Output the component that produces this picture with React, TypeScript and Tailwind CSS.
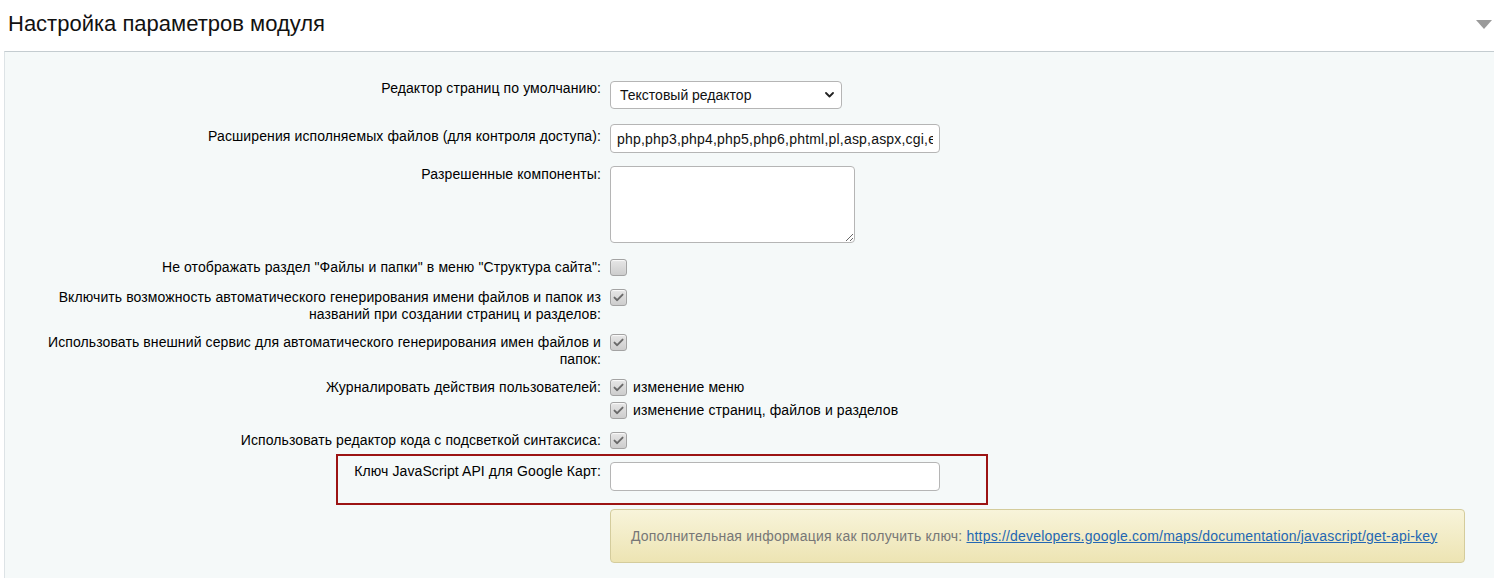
import type { ReactNode } from "react";

const font = { fontFamily: '"Liberation Sans", Arial, sans-serif' };

function Check({ checked }: { checked?: boolean }) {
  return (
    <span className="flex h-[17px] w-[17px] shrink-0 items-center justify-center rounded-[3px] border border-[#a3a3a3] bg-gradient-to-b from-[#e6e6e6] to-[#cdcdcd] shadow-[inset_0_1px_1px_rgba(255,255,255,0.8)]">
      {checked && (
        <svg width="11" height="9" viewBox="0 0 11 9" fill="none">
          <path d="M1.5 4.6 L4.2 7.2 L9.6 1.6" stroke="#6a6a6a" strokeWidth="1.9" strokeLinecap="round" strokeLinejoin="round" />
        </svg>
      )}
    </span>
  );
}

function Row({
  label,
  offset,
  className,
  children,
}: {
  label: ReactNode;
  offset: string;
  className?: string;
  children: ReactNode;
}) {
  return (
    <div className={`flex items-start ${className ?? ""}`}>
      <div className={`w-[596px] shrink-0 pl-[34px] text-right text-[14px] leading-[17px] tracking-[0.1px] text-black ${offset}`}>
        {label}
      </div>
      <div className="ml-[9px] flex-1">{children}</div>
    </div>
  );
}

export default function App() {
  return (
    <div className="min-h-[578px] overflow-hidden bg-white" style={font}>
      {/* heading */}
      <div className="flex h-[51px] items-start justify-between pl-[8px] pr-[2px]">
        <h1 className="mt-[10px] text-[22px] leading-[28px] text-[#111]">Настройка параметров модуля</h1>
        <svg className="mt-[20px]" width="16" height="9" viewBox="0 0 16 9">
          <path d="M0 0 H16 L8 9 Z" fill="#9a9a9a" />
        </svg>
      </div>

      {/* settings panel */}
      <div className="ml-[4px] h-[527px] border-t border-l border-t-[#c4ccd0] border-l-[#dde3e6] bg-[#f5f9f9] pt-[29px]">
        <Row label="Редактор страниц по умолчанию:" offset="mt-[-1px]">
          <div className="relative h-[28px] w-[232px] rounded-[4px] border border-[#b5b5b5] bg-white">
            <span className="absolute left-[9px] top-[5px] text-[14px] leading-[17px] text-[#111]">Текстовый редактор</span>
            <svg className="absolute right-[7px] top-[10px]" width="9" height="6" viewBox="0 0 9 6" fill="none">
              <path d="M1 1 L4.5 4.5 L8 1" stroke="#222" strokeWidth="1.8" strokeLinecap="round" strokeLinejoin="round" />
            </svg>
          </div>
        </Row>

        <Row label="Расширения исполняемых файлов (для контроля доступа):" offset="mt-[4px]" className="mt-[15px]">
          <input
            readOnly
            defaultValue="php,php3,php4,php5,php6,phtml,pl,asp,aspx,cgi,exe,ico,shtm,shtml"
            className="h-[29px] w-[330px] rounded-[4px] border border-[#b5b5b5] bg-white px-[6px] text-[14px] tracking-[0.2px] text-[#111] outline-none"
            style={font}
          />
        </Row>

        <Row label="Разрешенные компоненты:" offset="mt-0" className="mt-[13px]">
          <textarea
            readOnly
            className="block h-[77px] w-[245px] resize-y rounded-[4px] border border-[#b5b5b5] bg-white outline-none"
          />
        </Row>

        <Row label={'Не отображать раздел "Файлы и папки" в меню "Структура сайта":'} offset="mt-0" className="mt-[16px]">
          <Check />
        </Row>

        <Row
          label="Включить возможность автоматического генерирования имени файлов и папок из названий при создании страниц и разделов:"
          offset="mt-0"
          className="mt-[13px]"
        >
          <Check checked />
        </Row>

        <Row
          label="Использовать внешний сервис для автоматического генерирования имен файлов и папок:"
          offset="mt-0"
          className="mt-[11px]"
        >
          <Check checked />
        </Row>

        <Row label="Журналировать действия пользователей:" offset="mt-0" className="mt-[11px]">
          <div className="flex flex-col gap-[6px] text-[14px] leading-[17px] tracking-[0.1px] text-black">
            <label className="flex items-center gap-[6px]">
              <Check checked />
              изменение меню
            </label>
            <label className="flex items-center gap-[6px]">
              <Check checked />
              изменение страниц, файлов и разделов
            </label>
          </div>
        </Row>

        <Row label="Использовать редактор кода с подсветкой синтаксиса:" offset="mt-0" className="mt-[13px]">
          <Check checked />
        </Row>

        <div className="relative mt-[5px] pt-[8px] pb-[14px]">
          <div className="absolute left-[331px] top-0 h-[51px] w-[652px] border-2 border-[#9c1414]" />
          <Row label="Ключ JavaScript API для Google Карт:" offset="mt-[1px]">
            <input className="h-[29px] w-[330px] rounded-[4px] border border-[#b5b5b5] bg-white outline-none" />
          </Row>
        </div>

        <div className="ml-[605px] mt-[4px] flex h-[54px] w-[855px] items-center rounded-[4px] border border-[#d4cc9c] bg-gradient-to-b from-[#f8f4da] to-[#ede4b3] pl-[20px] text-[14px] tracking-[0.2px] text-[#777]">
          Дополнительная информация как получить ключ:&nbsp;
          <a href="#" className="text-[#2467b3] underline">
            https://developers.google.com/maps/documentation/javascript/get-api-key
          </a>
        </div>
      </div>
    </div>
  );
}
